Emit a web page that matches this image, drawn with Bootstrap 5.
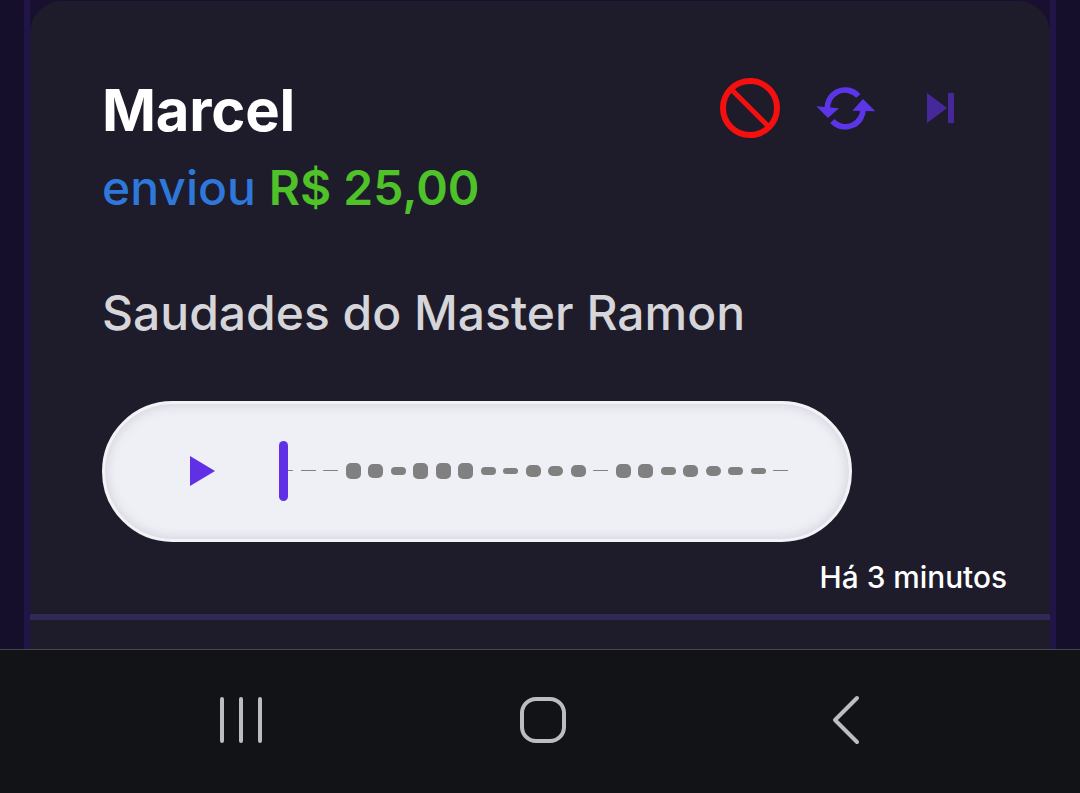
<!DOCTYPE html>
<html lang="pt-BR">
<head>
    <meta charset="UTF-8">
    <meta name="viewport" content="width=device-width, initial-scale=1.0">
    <title>Marcel enviou</title>
    <link rel="stylesheet" href="https://cdn.jsdelivr.net/npm/bootstrap@5.3.2/dist/css/bootstrap.min.css">
    <style>
        body {
            background: #160f2b;
            font-family: Inter, "Liberation Sans", sans-serif;
            height: 793px;
            overflow: hidden;
        }
        .page-area {
            height: 649px;
            padding: 0 24px;
            overflow: hidden;
        }
        .page-strip {
            height: 100%;
            padding-top: 1px;
            background: #191031;
            border-left: 6px solid #211447;
            border-right: 6px solid #211447;
        }
        .msg-card {
            height: 100%;
            background: #1e1c2b;
            border-radius: 32px 32px 0 0;
            padding-top: 79px;
        }
        .msg-body {
            padding: 0 43px 0 72px;
        }
        .msg-name {
            font-size: 58px;
            font-weight: 700;
            line-height: 60px;
            letter-spacing: -.2px;
            color: #fff;
        }
        .msg-amount {
            font-size: 48px;
            font-weight: 500;
            line-height: 58px;
            margin-top: 19px;
        }
        .amount-verb { color: #2f78db; }
        .amount-value { color: #4fc129; font-weight: 600; }
        .msg-text {
            font-size: 48px;
            font-weight: 500;
            line-height: 56px;
            margin-top: 68px;
            color: #d6d5da;
        }
        .msg-actions {
            gap: 33px;
            padding: 0 53px 0 0;
            height: 60px;
            margin-top: -2px;
        }
        .audio-pill {
            width: 750px;
            height: 141px;
            margin-top: 60px;
            background: #eff0f6;
            border: 3px solid #f2f2f7;
            border-radius: 71px;
            box-shadow: inset 0 0 12px rgba(120, 122, 140, .3);
            padding-left: 85px;
            padding-bottom: 2px;
        }
        .wave-box {
            margin-left: 64px;
        }
        .wave-bar {
            width: 15px;
            margin-right: 7.5px;
            background: #808080;
            border-radius: 5px;
            flex: none;
        }
        .wave-bar:first-child {
            width: 14px;
        }
        .wave-head {
            left: 0;
            top: 50%;
            width: 9px;
            height: 60px;
            margin-top: -30px;
            border-radius: 5px;
            background: #5f30e6;
        }
        .msg-time {
            font-size: 29.8px;
            font-weight: 500;
            line-height: 36px;
            margin-top: 17px;
            color: #fff;
        }
        .msg-rule {
            height: 6px;
            margin-top: 19px;
            background: #2e2a55;
        }
        .nav-bottom {
            height: 144px;
            background: #121317;
            border-top: 1px solid #47474a;
            padding-left: 219px;
            padding-right: 219px;
            padding-bottom: 4px;
        }
    </style>
</head>
<body>
    <div class="page-area">
        <div class="page-strip">
            <div class="msg-card">
                <div class="msg-body">
                    <div class="d-flex justify-content-between align-items-start">
                        <div>
                            <div class="msg-name">Marcel</div>
                            <div class="msg-amount"><span class="amount-verb">enviou</span> <span class="amount-value">R$ 25,00</span></div>
                        </div>
                        <div class="msg-actions d-flex align-items-center">
                            <svg width="60" height="60" viewBox="0 0 60 60" fill="none" stroke="#f60f0f" stroke-width="6"><circle cx="30" cy="30" r="27"/><path d="M11 11 49 49" stroke-width="5"/></svg>
                            <svg width="80.67" height="44" viewBox="340 76 242 132" fill="#5c35e8"><path d="M384 150A53 53 0 0 1 476 106M490 140A53 53 0 0 1 398 181" fill="none" stroke="#5c35e8" stroke-width="17"/><path d="M350 137 418 143 385 172Z"/><path d="M527 152 458 150 490 115Z"/></svg>
                            <svg width="27" height="30" viewBox="0 0 27 30" fill="#47289a"><path d="M0 0 20 15 0 30Z"/><path d="M21 0h6v30h-6z"/></svg>
                        </div>
                    </div>
                    <div class="msg-text">Saudades do Master Ramon</div>
                    <div class="audio-pill d-flex align-items-center">
                        <svg width="25" height="30" viewBox="0 0 25 30" fill="#5f30e6"><path d="M0 0 25 15 0 30Z"/></svg>
                        <div class="wave-box position-relative d-flex align-items-center" id="wave"></div>
                    </div>
                    <div class="msg-time text-end">Há 3 minutos</div>
                </div>
                <div class="msg-rule"></div>
            </div>
        </div>
    </div>
    <div class="nav-bottom d-flex justify-content-between align-items-center">
        <svg width="44" height="46" viewBox="0 0 44 46" fill="none" stroke="#bdbdbf" stroke-width="4" stroke-linecap="round"><path d="M3 2v42M22 2v42M41 2v42"/></svg>
        <svg class="me-2" width="48" height="48" viewBox="0 0 48 48" fill="none" stroke="#bdbdbf" stroke-width="4"><rect x="3" y="3" width="42" height="42" rx="14"/></svg>
        <svg width="30" height="50" viewBox="0 0 30 50" fill="none" stroke="#bdbdbf" stroke-width="4" stroke-linecap="round" stroke-linejoin="round"><path d="M26 3 4 25 26 47"/></svg>
    </div>
    <script src="https://cdn.jsdelivr.net/npm/bootstrap@5.3.2/dist/js/bootstrap.bundle.min.js"></script>
    <script>
        const heights = [1.5, 1.5, 1.5, 16, 14, 8, 16, 16, 16, 8, 6, 12, 10, 12, 1.5, 14, 14, 8, 12, 10, 8, 6, 1.5];
        const wave = document.getElementById("wave");
        heights.forEach((h) => {
            const bar = document.createElement("span");
            bar.className = "wave-bar";
            bar.style.height = h + "px";
            wave.appendChild(bar);
        });
        const head = document.createElement("span");
        head.className = "wave-head position-absolute";
        wave.appendChild(head);
    </script>
</body>
</html>
